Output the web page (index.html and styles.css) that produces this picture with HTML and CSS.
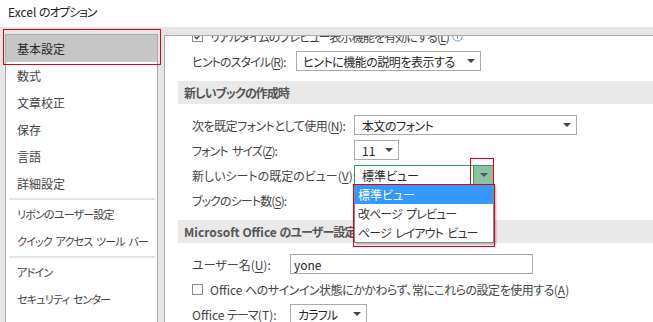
FILE: index.html
```html
<!DOCTYPE html>
<html lang="ja">
<head>
    <meta charset="UTF-8">
    <meta name="viewport" content="width=device-width, initial-scale=1.0">
    <title>Excel のオプション</title>
    <link rel="stylesheet" href="styles.css">
</head>
<body>
    <div class="titlebar">Excel <span class="k">のオプション</span></div>
    <div class="main">
        <ul class="nav">
            <li class="nav-item selected">基本設定<span class="mark mark-nav"></span></li>
            <li class="nav-item">数式</li>
            <li class="nav-item">文章校正</li>
            <li class="nav-item">保存</li>
            <li class="nav-item">言語</li>
            <li class="nav-item">詳細設定</li>
            <li class="nav-sep"></li>
            <li class="nav-item k">リボンのユーザー設定</li>
            <li class="nav-item k">クイック アクセス ツール バー</li>
            <li class="nav-sep"></li>
            <li class="nav-item k">アドイン</li>
            <li class="nav-item k">セキュリティ センター</li>
        </ul>

        <div class="pane">
            <div class="pane-inner">
                <div class="row">
                    <span class="checkbox">
                        <svg width="9" height="9" viewBox="0 0 9 9"><path d="M1.5 4.5 L3.7 6.7 L7.8 2.2" fill="none" stroke="#444" stroke-width="1.3"/></svg>
                    </span>
                    <span class="k">リアルタイムのプレビュー表示機能を有効にする(<u>L</u>)</span>
                    <svg class="info" width="11" height="11" viewBox="0 0 11 11"><circle cx="5.5" cy="5.5" r="4.6" fill="none" stroke="#6f9fd8" stroke-width="1"/><rect x="5" y="4.5" width="1" height="3.5" fill="#6f9fd8"/><rect x="5" y="2.8" width="1" height="1" fill="#6f9fd8"/></svg>
                </div>
                <div class="row">
                    <label class="label w-hint k">ヒントのスタイル(<u>R</u>):</label>
                    <div class="select w-hint-select">
                        <span class="k-soft">ヒントに機能の説明を表示する</span><span class="arrow"></span>
                    </div>
                </div>

                <div class="section k">新しいブックの作成時</div>
                <div class="row">
                    <label class="label w-book k-soft">次を既定フォントとして使用(<u>N</u>):</label>
                    <div class="select w-font">
                        <span class="k-soft">本文のフォント</span><span class="arrow"></span>
                    </div>
                </div>
                <div class="row">
                    <label class="label w-book k">フォント サイズ(<u>Z</u>):</label>
                    <div class="select w-size">
                        <span>11</span><span class="arrow"></span>
                    </div>
                </div>
                <div class="row">
                    <label class="label w-book">新しいシートの既定のビュー(<u>V</u>):</label>
                    <div class="select select-open w-view">
                        <span>標準ビュー</span>
                        <span class="drop-btn"><span class="arrow"></span></span>
                        <span class="mark mark-btn"></span>
                        <ul class="drop-list">
                            <li class="active">標準ビュー</li>
                            <li class="k">改ページ プレビュー</li>
                            <li class="k">ページ レイアウト ビュー</li>
                            <li class="mark mark-list"></li>
                        </ul>
                    </div>
                </div>
                <div class="row">
                    <label class="label w-book k">ブックのシート数(<u>S</u>):</label>
                    <div class="select w-size"></div>
                </div>

                <div class="section">Microsoft Office <span class="k">のユーザー設定</span></div>
                <div class="row">
                    <label class="label w-user">ユーザー名(<u>U</u>):</label>
                    <div class="input w-name">yone</div>
                </div>
                <div class="row">
                    <span class="checkbox"></span>
                    <span>Office <span class="k-soft">へのサインイン状態にかかわらず、常にこれらの設定を使用する</span>(<u>A</u>)</span>
                </div>
                <div class="row">
                    <label class="label w-user">Office <span class="k">テーマ</span>(<u>T</u>):</label>
                    <div class="select w-theme">
                        <span class="k">カラフル</span><span class="arrow"></span>
                    </div>
                </div>
            </div>
        </div>
    </div>
</body>
</html>
```

FILE: styles.css
```css
body { margin: 0; width: 653px; height: 322px; overflow: hidden; background: #e6e6e6; font-family: "Noto Sans CJK JP", sans-serif; font-size: 12px; color: #444; font-feature-settings: "palt"; }
u { text-decoration: underline; text-underline-offset: 2px; }

.k { letter-spacing: -0.9px; word-spacing: 2.5px; }
.k-soft { letter-spacing: -0.5px; word-spacing: 1.5px; }

.titlebar { height: 27px; line-height: 24px; padding-left: 8px; background: #fff; color: #222; }
.titlebar .k { letter-spacing: -1.2px; }

.main { display: flex; align-items: flex-start; height: 320px; padding: 7px 0 0 5px; box-sizing: border-box; }

.nav { list-style: none; margin: 0; padding: 0; width: 153px; height: 320px; box-sizing: border-box; background: #fff; border: 1px solid #ababab; flex-shrink: 0; }
.nav-item { position: relative; height: 27px; line-height: 27px; padding-left: 11px; white-space: nowrap; }
.nav-item.k { font-size: 11px; letter-spacing: -0.8px; word-spacing: 2px; }
.nav-item.selected { background: #c6c6c6; color: #262626; }
.nav-sep { height: 2px; margin: 1px 2px 1px 3px; background: #e4e4e4; }

.mark { position: absolute; border: 1px solid #e3000f; pointer-events: none; }
.mark-nav { top: -6px; left: -3px; right: -4px; bottom: -3px; }
.mark-btn { top: -8px; right: -1px; width: 22px; bottom: -1px; }
.mark-list { top: -1px; left: -2px; right: -2px; bottom: -5px; height: auto; padding: 0; }

.pane { flex: 1; height: 320px; margin: 1px 0 0 6px; background: #fff; border-top: 1px solid #ababab; border-left: 1px solid #ababab; overflow: hidden; }
.pane-inner { margin-top: -10px; }

.row { display: flex; align-items: center; height: 20px; margin-bottom: 5px; padding-left: 27px; white-space: nowrap; }
.label { flex-shrink: 0; }
.w-hint { width: 104px; }
.w-book { width: 162px; }
.w-user { width: 98px; }

.checkbox { display: flex; align-items: center; justify-content: center; width: 11px; height: 11px; margin-right: 7px; border: 1px solid #8c8c8c; box-sizing: border-box; background: #fff; flex-shrink: 0; }
.info { margin-left: 3px; }

.section { height: 23px; line-height: 23px; margin: 10px 0 11px 13px; padding-left: 6px; background: #e9e9e9; font-weight: bold; color: #555; white-space: nowrap; }

.select, .input { position: relative; display: flex; align-items: center; justify-content: space-between; height: 20px; padding: 0 5px 0 7px; box-sizing: border-box; border: 1px solid #ababab; background: #fff; color: #262626; }
.input { justify-content: flex-start; padding-left: 3px; }
.w-hint-select { width: 185px; padding-left: 6px; }
.w-font { width: 223px; }
.w-size { width: 45px; }
.w-view { width: 140px; }
.w-name { width: 243px; }
.w-theme { width: 77px; }

.arrow { width: 0; height: 0; border-top: 4px solid #444; border-left: 4px solid transparent; border-right: 4px solid transparent; }

.select-open { border-color: #3e9a63; padding-right: 0; }
.drop-btn { display: flex; align-items: center; justify-content: center; align-self: stretch; width: 19px; background: #8bc3a1; border-left: 1px solid #3e9a63; }
.drop-btn .arrow { border-top-color: #555; }

.drop-list { position: absolute; top: 100%; left: -1px; width: 140px; margin: 0; padding: 0; list-style: none; box-sizing: border-box; background: #fff; border: 1px solid #8a8a8a; box-shadow: 2px 2px 2px rgba(0, 0, 0, 0.3); z-index: 2; }
.drop-list li { height: 19px; line-height: 19px; padding-left: 3px; white-space: nowrap; color: #333; }
.drop-list li.active { background: #3399ff; color: #fff; }
.drop-list li.mark { position: absolute; height: auto; }
```
